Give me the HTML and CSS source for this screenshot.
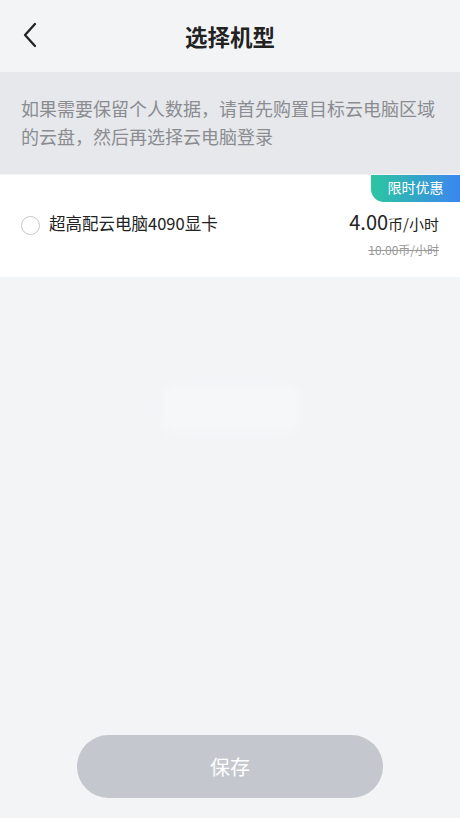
FILE: index.html
```html
<!DOCTYPE html>
<html lang="zh">
<head>
	<meta charset="utf-8">
	<title>选择机型</title>
	<meta name="viewport" content="width=device-width, initial-scale=1">
	<link rel="stylesheet" href="styles.css">
</head>
<body>
	<div class="page">
		<div class="header">
			<span class="back">
				<svg width="16" height="26" viewBox="0 0 16 26"><path d="M13 2 L3 13 L13 24" fill="none" stroke="#222" stroke-width="2.3" stroke-linecap="round" stroke-linejoin="round"/></svg>
			</span>
			<div class="title">选择机型</div>
		</div>

		<div class="notice">如果需要保留个人数据，请首先购置目标云电脑区域的云盘，然后再选择云电脑登录</div>

		<div class="card">
			<div class="badge">限时优惠</div>
			<div class="row">
				<span class="radio"></span>
				<span class="name">超高配云电脑4090显卡</span>
				<div class="price">
					<div class="now"><b>4.00</b>币/小时</div>
					<div class="old">10.00币/小时</div>
				</div>
			</div>
		</div>

		<div class="toast"></div>

		<div class="footer">
			<button class="save">保存</button>
		</div>
	</div>
</body>
</html>
```

FILE: styles.css
```css
body {
	margin: 0;
	background: #f3f4f6;
	font-family: "Noto Sans CJK SC", "Noto Sans", sans-serif;
}

.page {
	height: 818px;
	display: flex;
	flex-direction: column;
}

.header {
	height: 72px;
	display: flex;
	align-items: center;
	justify-content: center;
	position: relative;
}

.back {
	position: absolute;
	left: 22px;
	top: 22px;
}

.title {
	font-size: 22.5px;
	font-weight: bold;
	color: #222;
}

.notice {
	background: #e7e8eb;
	color: #8a8c91;
	font-size: 18px;
	line-height: 28px;
	padding: 22px 21px 24px 21px;
	height: 56px;
}

.card {
	background: #fff;
	margin-top: 1px;
	height: 102px;
	position: relative;
}

.badge {
	position: absolute;
	right: 0;
	top: 0;
	width: 89px;
	height: 27px;
	line-height: 25px;
	text-align: center;
	color: #fff;
	font-size: 14px;
	border-bottom-left-radius: 13px;
	background: linear-gradient(90deg, #2cc6a0, #3b86f0);
}

.row {
	display: flex;
	align-items: flex-start;
	padding: 40px 21px 0 21px;
}

.radio {
	width: 17px;
	height: 17px;
	border: 1px solid #c8c9cc;
	border-radius: 50%;
	margin-top: 1px;
}

.name {
	font-size: 16.5px;
	color: #222;
	margin-left: 9px;
	line-height: 24px;
	margin-top: -4px;
}

.price {
	margin-left: auto;
	text-align: right;
}

.now {
	font-size: 15px;
	color: #222;
	line-height: 26px;
	margin-top: -6px;
}

.now b {
	font-weight: normal;
	font-size: 20px;
}

.old {
	font-size: 12px;
	color: #999;
	text-decoration: line-through;
	margin-top: 4px;
}

.toast {
	width: 136px;
	height: 48px;
	margin: 108px auto 0 auto;
	background: #f6f7f8;
	border-radius: 8px;
	filter: blur(4px);
}

.footer {
	margin-top: auto;
	padding-bottom: 20px;
	display: flex;
	justify-content: center;
}

.save {
	width: 306px;
	height: 63px;
	border: none;
	border-radius: 32px;
	background: #c5c7cf;
	color: #fff;
	font-size: 20px;
	font-family: "Noto Sans CJK SC", sans-serif;
}
```
